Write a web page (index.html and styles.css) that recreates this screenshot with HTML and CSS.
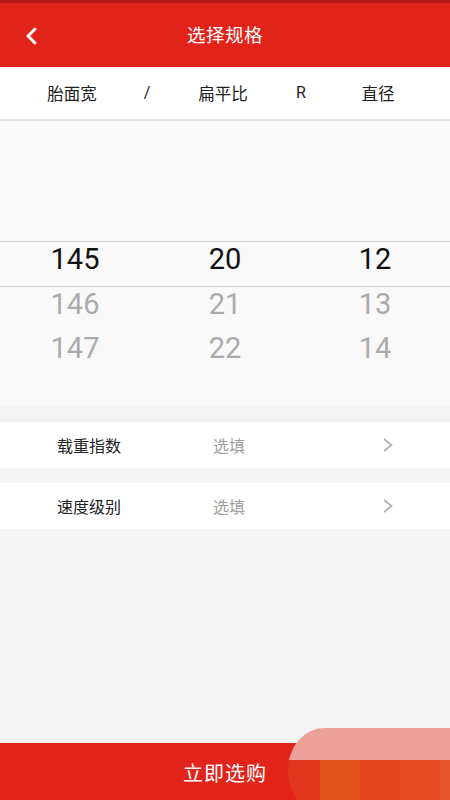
FILE: index.html
```html
<!DOCTYPE html>
<html lang="zh-CN">
<head>
<meta charset="utf-8">
<title>选择规格</title>
<link rel="stylesheet" href="styles.css">
</head>
<body>
<div class="page">
  <div class="status"></div>
  <header class="topbar">
    <div class="back">
      <svg width="16" height="20" viewBox="0 0 16 20"><path d="M11 3 L4 10 L11 17" fill="none" stroke="#fff" stroke-width="3" stroke-linecap="round" stroke-linejoin="round"/></svg>
    </div>
    <div class="title">选择规格</div>
    <div></div>
  </header>
  <div class="colhead">
    <span>胎面宽</span>
    <span class="latin">/</span>
    <span>扁平比</span>
    <span class="latin">R</span>
    <span>直径</span>
  </div>
  <div class="picker">
    <div class="wheel-top"></div>
    <div class="wheel-row sel"><span>145</span><span>20</span><span>12</span></div>
    <div class="wheel-row"><span>146</span><span>21</span><span>13</span></div>
    <div class="wheel-row"><span>147</span><span>22</span><span>14</span></div>
  </div>
  <div class="item">
    <span class="label">载重指数</span>
    <span class="value">选填</span>
    <svg class="arrow" width="12" height="16" viewBox="0 0 12 16"><path d="M2 2 L9.5 8 L2 14" fill="none" stroke="#b0b0b0" stroke-width="1.7"/></svg>
  </div>
  <div class="item">
    <span class="label">速度级别</span>
    <span class="value">选填</span>
    <svg class="arrow" width="12" height="16" viewBox="0 0 12 16"><path d="M2 2 L9.5 8 L2 14" fill="none" stroke="#b0b0b0" stroke-width="1.7"/></svg>
  </div>
  <div class="spacer"></div>
  <footer class="buy">
    <span>立即选购</span>
    <div class="blob">
      <div class="blob-top"></div>
      <div class="blob-stripes">
        <i class="s1"></i><i class="s2"></i><i class="s3"></i><i class="s4"></i><i class="s5"></i>
      </div>
    </div>
  </footer>
</div>
</body>
</html>
```

FILE: styles.css
```css
* { box-sizing: border-box; }
html, body { margin: 0; padding: 0; }
body {
  width: 450px;
  height: 800px;
  overflow: hidden;
  background: #f4f4f4;
  font-family: "Noto Sans CJK SC", "Noto Sans", sans-serif;
}
.page {
  height: 800px;
  display: flex;
  flex-direction: column;
}
.status { height: 3px; background: #b41b15; flex: none; }
.topbar {
  height: 64px;
  flex: none;
  background: #e2231a;
  display: grid;
  grid-template-columns: 64px 1fr 64px;
  align-items: center;
}
.back { padding-left: 24px; display: flex; align-items: center; padding-top: 2px; }
.title {
  text-align: center;
  color: #fff;
  font-size: 18.5px;
  letter-spacing: 0.5px;
  padding-bottom: 2px;
}
.colhead {
  height: 54px;
  flex: none;
  background: #fff;
  border-bottom: 2px solid #e2e2e2;
  display: grid;
  grid-template-columns: 100px 50px 102px 54px 100px;
  padding-left: 22px;
  align-items: center;
  font-size: 16.5px;
  color: #222;
}
.colhead span { text-align: center; padding-bottom: 1px; }
.colhead .latin { font-family: Roboto, sans-serif; font-size: 16px; }
.picker {
  height: 286px;
  flex: none;
  background: #f9f9f9;
  overflow: hidden;
}
.wheel-top { height: 120px; }
.wheel-row {
  height: 44px;
  display: grid;
  grid-template-columns: 150px 150px 150px;
  font-family: Roboto, sans-serif;
  font-size: 29px;
  line-height: 34px;
  color: #ababab;
}
.wheel-row span { text-align: center; }
.wheel-row.sel {
  height: 46px;
  color: #111;
  border-top: 1px solid #d5d5d5;
  border-bottom: 1px solid #d5d5d5;
  line-height: 34px;
}
.item {
  margin-top: 15px;
  height: 46px;
  flex: none;
  background: #fff;
  display: flex;
  align-items: center;
  padding-left: 57px;
}
.label { width: 156px; font-size: 16px; color: #222; }
.value { flex: 1; font-size: 16px; color: #9e9e9e; }
.arrow { margin-right: 56px; }
.spacer { flex: 1; }
.buy {
  height: 57px;
  flex: none;
  background: #e2231a;
  position: relative;
  display: flex;
  align-items: center;
  justify-content: center;
  color: #fff;
  font-size: 20px;
  letter-spacing: 1px;
}
.buy span { padding-top: 2px; }
.blob {
  position: absolute;
  left: 288px;
  top: -15px;
  width: 170px;
  height: 86px;
  border-radius: 36px 0 0 36px / 42px 0 0 42px;
  overflow: hidden;
  display: flex;
  flex-direction: column;
}
.blob-top { height: 32px; background: #eda19a; flex: none; }
.blob-stripes { flex: 1; display: flex; }
.blob-stripes i { display: block; height: 100%; }
.s1 { width: 32px; background: #e2361f; }
.s2 { width: 40px; background: #e0511c; }
.s3 { width: 40px; background: #e5461b; }
.s4 { width: 40px; background: #e54b20; }
.s5 { flex: 1; background: #e7552b; }
```
